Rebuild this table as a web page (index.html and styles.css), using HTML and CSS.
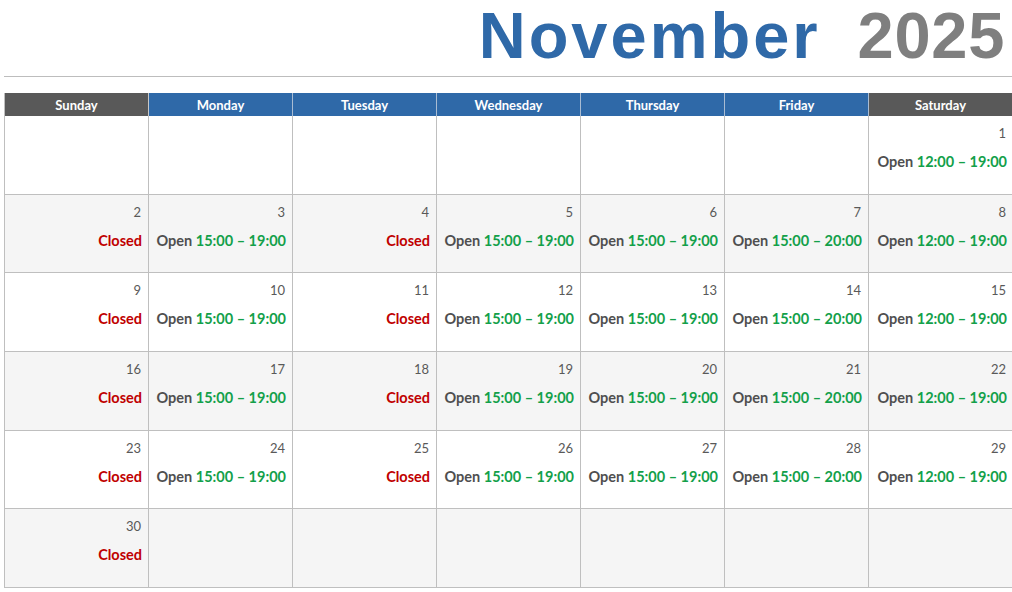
FILE: index.html
```html
<!DOCTYPE html>
<html>
<head>
<meta charset="utf-8">
<link rel="stylesheet" href="styles.css">
</head>
<body>
<header class="title">
  <span class="month">November</span>
  <span class="year">2025</span>
</header>
<div class="rule"></div>
<div class="cal">
  <div class="hd we">Sunday</div>
  <div class="hd">Monday</div>
  <div class="hd">Tuesday</div>
  <div class="hd">Wednesday</div>
  <div class="hd">Thursday</div>
  <div class="hd">Friday</div>
  <div class="hd we">Saturday</div>

  <div class="c"></div><div class="c"></div><div class="c"></div><div class="c"></div><div class="c"></div><div class="c"></div>
  <div class="c"><div class="n">1</div><div class="s"><span class="o">Open</span> <span class="t">12:00 – 19:00</span></div></div>

  <div class="c g"><div class="n">2</div><div class="s x">Closed</div></div>
  <div class="c g"><div class="n">3</div><div class="s"><span class="o">Open</span> <span class="t">15:00 – 19:00</span></div></div>
  <div class="c g"><div class="n">4</div><div class="s x">Closed</div></div>
  <div class="c g"><div class="n">5</div><div class="s"><span class="o">Open</span> <span class="t">15:00 – 19:00</span></div></div>
  <div class="c g"><div class="n">6</div><div class="s"><span class="o">Open</span> <span class="t">15:00 – 19:00</span></div></div>
  <div class="c g"><div class="n">7</div><div class="s"><span class="o">Open</span> <span class="t">15:00 – 20:00</span></div></div>
  <div class="c g"><div class="n">8</div><div class="s"><span class="o">Open</span> <span class="t">12:00 – 19:00</span></div></div>

  <div class="c"><div class="n">9</div><div class="s x">Closed</div></div>
  <div class="c"><div class="n">10</div><div class="s"><span class="o">Open</span> <span class="t">15:00 – 19:00</span></div></div>
  <div class="c"><div class="n">11</div><div class="s x">Closed</div></div>
  <div class="c"><div class="n">12</div><div class="s"><span class="o">Open</span> <span class="t">15:00 – 19:00</span></div></div>
  <div class="c"><div class="n">13</div><div class="s"><span class="o">Open</span> <span class="t">15:00 – 19:00</span></div></div>
  <div class="c"><div class="n">14</div><div class="s"><span class="o">Open</span> <span class="t">15:00 – 20:00</span></div></div>
  <div class="c"><div class="n">15</div><div class="s"><span class="o">Open</span> <span class="t">12:00 – 19:00</span></div></div>

  <div class="c g"><div class="n">16</div><div class="s x">Closed</div></div>
  <div class="c g"><div class="n">17</div><div class="s"><span class="o">Open</span> <span class="t">15:00 – 19:00</span></div></div>
  <div class="c g"><div class="n">18</div><div class="s x">Closed</div></div>
  <div class="c g"><div class="n">19</div><div class="s"><span class="o">Open</span> <span class="t">15:00 – 19:00</span></div></div>
  <div class="c g"><div class="n">20</div><div class="s"><span class="o">Open</span> <span class="t">15:00 – 19:00</span></div></div>
  <div class="c g"><div class="n">21</div><div class="s"><span class="o">Open</span> <span class="t">15:00 – 20:00</span></div></div>
  <div class="c g"><div class="n">22</div><div class="s"><span class="o">Open</span> <span class="t">12:00 – 19:00</span></div></div>

  <div class="c"><div class="n">23</div><div class="s x">Closed</div></div>
  <div class="c"><div class="n">24</div><div class="s"><span class="o">Open</span> <span class="t">15:00 – 19:00</span></div></div>
  <div class="c"><div class="n">25</div><div class="s x">Closed</div></div>
  <div class="c"><div class="n">26</div><div class="s"><span class="o">Open</span> <span class="t">15:00 – 19:00</span></div></div>
  <div class="c"><div class="n">27</div><div class="s"><span class="o">Open</span> <span class="t">15:00 – 19:00</span></div></div>
  <div class="c"><div class="n">28</div><div class="s"><span class="o">Open</span> <span class="t">15:00 – 20:00</span></div></div>
  <div class="c"><div class="n">29</div><div class="s"><span class="o">Open</span> <span class="t">12:00 – 19:00</span></div></div>

  <div class="c g"><div class="n">30</div><div class="s x">Closed</div></div>
  <div class="c g"></div><div class="c g"></div><div class="c g"></div><div class="c g"></div><div class="c g"></div><div class="c g"></div>
</div>
</body>
</html>
```

FILE: styles.css
```css
html, body {
  margin: 0;
  padding: 0;
  background: #ffffff;
  font-family: "Lato", "Liberation Sans", sans-serif;
}

.title {
  height: 76px;
  display: flex;
  justify-content: flex-end;
  align-items: flex-start;
  gap: 37px;
  padding-right: 7px;
  box-sizing: border-box;
  font-family: "Liberation Sans", Arial, sans-serif;
  font-weight: 700;
  font-size: 65px;
  line-height: 1.12;
}

.month {
  color: #2f69a8;
  letter-spacing: 3px;
}

.year {
  color: #7f7f7f;
  letter-spacing: 0.7px;
}

.rule {
  height: 1px;
  background: #bdbdbd;
  margin-left: 4px;
}

.cal {
  margin: 16px 0 0 4px;
  width: 1008px;
  display: grid;
  grid-template-columns: repeat(7, 144px);
  grid-template-rows: 23px repeat(6, 78.67px);
  border-left: 1px solid #bfbfbf;
  box-sizing: border-box;
}

.hd {
  background: #2f69a8;
  color: #ffffff;
  font-weight: 700;
  font-size: 13px;
  display: flex;
  align-items: center;
  justify-content: center;
  border-right: 1px solid #a9bcd3;
  padding-top: 1px;
  box-sizing: border-box;
}

.hd.we {
  background: #595959;
  border-right-color: #c8c8c8;
}

.hd:last-child { border-right: none; }

.c {
  background: #ffffff;
  border-right: 1px solid #bfbfbf;
  border-bottom: 1px solid #bfbfbf;
  box-sizing: border-box;
  text-align: right;
  padding: 9px 6px 0 0;
}

.c:nth-child(7n) { border-right: none; }

.c.g { background: #f5f5f5; }

.n {
  color: #595959;
  font-size: 13px;
  line-height: 16px;
  font-weight: 400;
  padding-right: 1px;
}

.s {
  margin-top: 12px;
  font-size: 14.5px;
  line-height: 18px;
  font-weight: 700;
  white-space: nowrap;
}

.s.x { color: #c00000; }

.o { color: #4f4f4f; }

.t { color: #13a04a; }
```
